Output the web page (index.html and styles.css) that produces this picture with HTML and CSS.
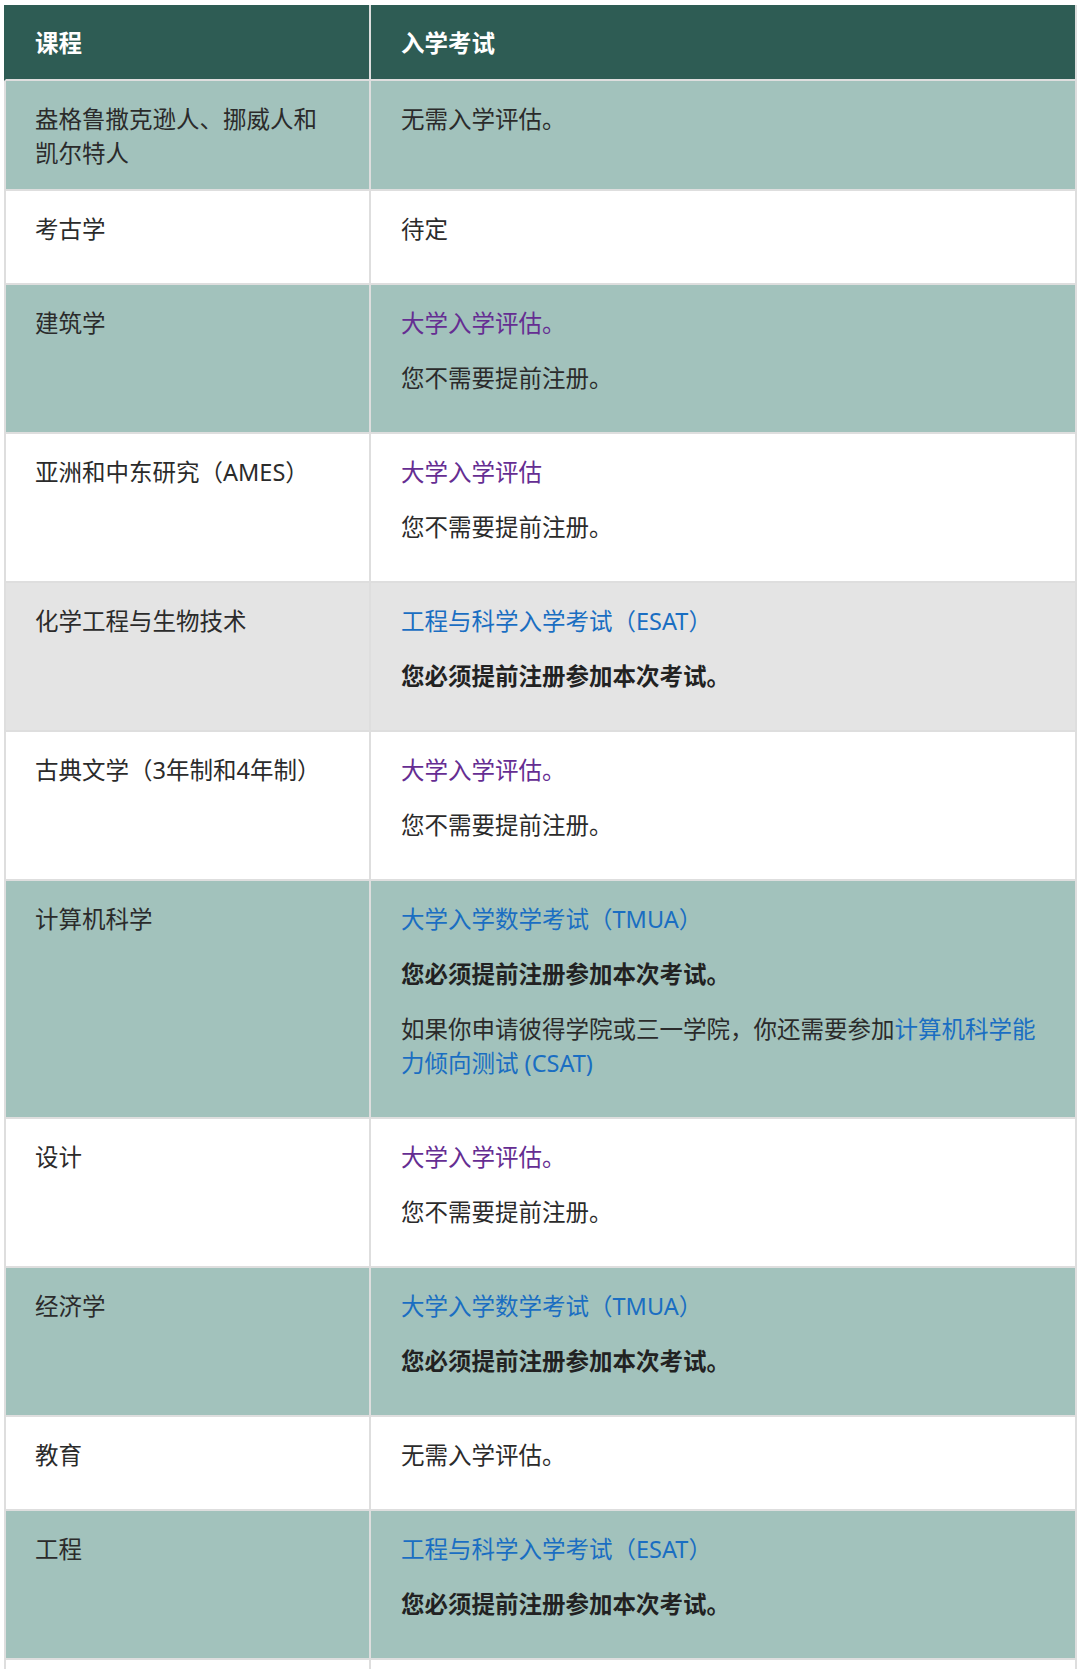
FILE: index.html
```html
<!DOCTYPE html>
<html lang="zh-CN">
<head>
<meta charset="utf-8">
<title>入学考试</title>
<link rel="stylesheet" href="styles.css">
</head>
<body>
<div class="wrap">
<table class="exams">
  <thead>
    <tr>
      <th class="course">课程</th>
      <th class="exam">入学考试</th>
    </tr>
  </thead>
  <tbody>
    <tr class="teal">
      <td class="course">盎格鲁撒克逊人、挪威人和凯尔特人</td>
      <td class="exam"><p>无需入学评估。</p></td>
    </tr>
    <tr class="white">
      <td class="course">考古学</td>
      <td class="exam"><p>待定</p></td>
    </tr>
    <tr class="teal">
      <td class="course">建筑学</td>
      <td class="exam"><p><a class="visited" href="#">大学入学评估。</a></p><p>您不需要提前注册。</p></td>
    </tr>
    <tr class="white">
      <td class="course">亚洲和中东研究（AMES）</td>
      <td class="exam"><p><a class="visited" href="#">大学入学评估</a></p><p>您不需要提前注册。</p></td>
    </tr>
    <tr class="grey">
      <td class="course">化学工程与生物技术</td>
      <td class="exam"><p><a href="#">工程与科学入学考试（ESAT）</a></p><p><strong>您必须提前注册参加本次考试。</strong></p></td>
    </tr>
    <tr class="white">
      <td class="course">古典文学（3年制和4年制）</td>
      <td class="exam"><p><a class="visited" href="#">大学入学评估。</a></p><p>您不需要提前注册。</p></td>
    </tr>
    <tr class="teal">
      <td class="course">计算机科学</td>
      <td class="exam"><p><a href="#">大学入学数学考试（TMUA）</a></p><p><strong>您必须提前注册参加本次考试。</strong></p><p>如果你申请彼得学院或三一学院，你还需要参加<a href="#">计算机科学能力倾向测试 (CSAT)</a></p></td>
    </tr>
    <tr class="white">
      <td class="course">设计</td>
      <td class="exam"><p><a class="visited" href="#">大学入学评估。</a></p><p>您不需要提前注册。</p></td>
    </tr>
    <tr class="teal">
      <td class="course">经济学</td>
      <td class="exam"><p><a href="#">大学入学数学考试（TMUA）</a></p><p><strong>您必须提前注册参加本次考试。</strong></p></td>
    </tr>
    <tr class="white">
      <td class="course">教育</td>
      <td class="exam"><p>无需入学评估。</p></td>
    </tr>
    <tr class="teal">
      <td class="course">工程</td>
      <td class="exam"><p><a href="#">工程与科学入学考试（ESAT）</a></p><p><strong>您必须提前注册参加本次考试。</strong></p></td>
    </tr>
    <tr class="white">
      <td class="course">英语</td>
      <td class="exam"><p>无需入学评估。</p></td>
    </tr>
  </tbody>
</table>
</div>
</body>
</html>
```
FILE: styles.css
```css
html, body {
  margin: 0;
  padding: 0;
  background: #ffffff;
}

body {
  font-family: "Noto Sans", "Noto Sans CJK SC", sans-serif;
  font-size: 23.5px;
  color: #2b2b2b;
}

.wrap {
  padding: 5px 3px 0 4px;
}

.exams {
  border-collapse: separate;
  border-spacing: 0;
  table-layout: fixed;
  width: 1073px;
}

.exams th,
.exams td {
  box-sizing: border-box;
  vertical-align: top;
  text-align: left;
  line-height: 34px;
  border-right: 2px solid #dedede;
  border-bottom: 2px solid #dedede;
  padding-top: 21px;
  padding-bottom: 19px;
}

.exams .course {
  width: 367px;
  border-left: 2px solid #dedede;
  padding-left: 29px;
  padding-right: 40px;
}

.exams .exam {
  width: 706px;
  padding-left: 30px;
  padding-right: 30px;
}

.exams td.exam {
  padding-bottom: 37px;
}

.exams thead th {
  background: #2e5c54;
  color: #ffffff;
  font-weight: 700;
}

.exams thead th.course {
  border-left-color: #2e5c54;
}

.exams p {
  margin: 0;
}

.exams p + p {
  margin-top: 21px;
}

.teal td {
  background: #a2c2bc;
}

.white td {
  background: #ffffff;
}

.grey td {
  background: #e4e4e4;
}

.exams a {
  color: #1a6ec2;
  text-decoration: none;
}

.exams a.visited {
  color: #652d92;
}

.exams strong {
  font-weight: 700;
  color: #222222;
}
```
